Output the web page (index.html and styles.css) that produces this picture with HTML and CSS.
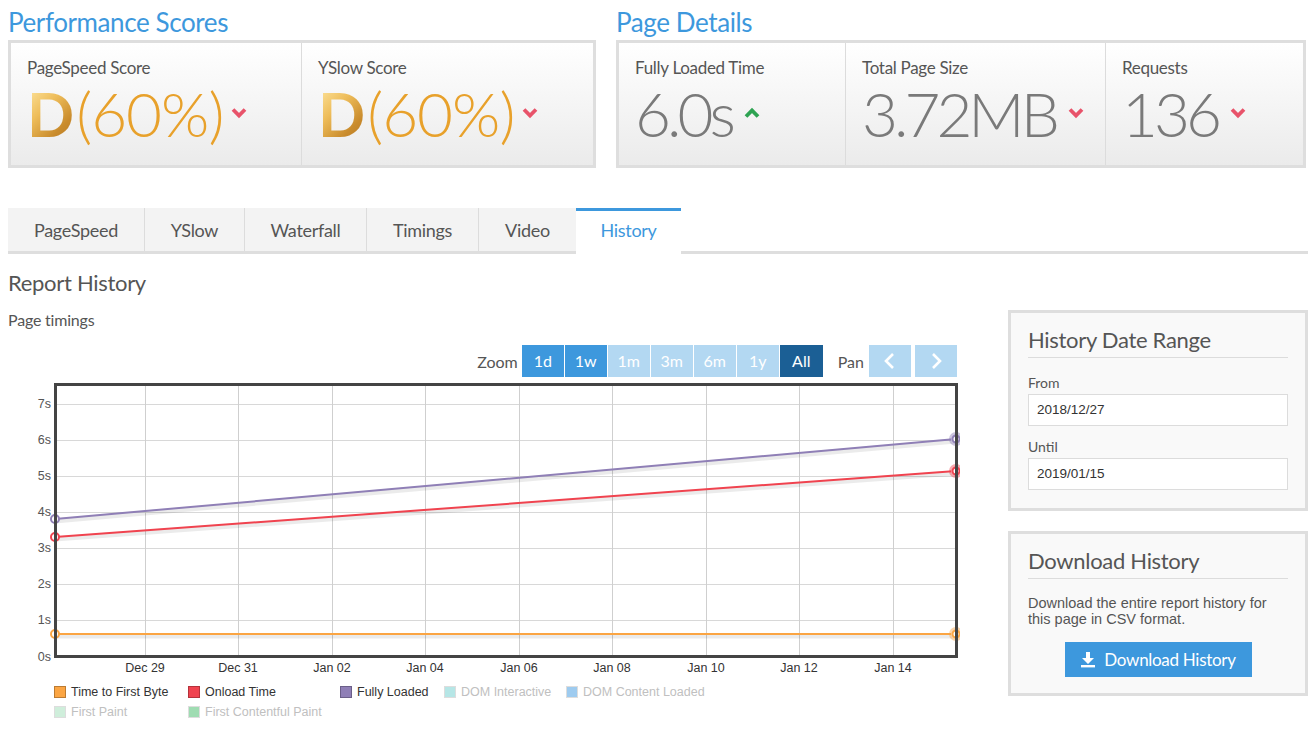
FILE: index.html
```html
<!DOCTYPE html>
<html>
<head>
<meta charset="utf-8">
<link rel="stylesheet" href="styles.css">
</head>
<body>
<div class="page">
  <div class="top">
    <section class="scores">
      <h2 class="sec-title">Performance Scores</h2>
      <div class="box">
        <div class="cell c-ps">
          <div class="label">PageSpeed Score</div>
          <div class="value"><span class="grade">D</span><span class="pct">(60%)</span>
            <svg class="chev" width="16" height="12" viewBox="0 0 16 12"><path d="M2 2.5 L8 8.5 L14 2.5" fill="none" stroke="#e8536a" stroke-width="3.8"/></svg></div>
        </div>
        <div class="cell c-ys">
          <div class="label">YSlow Score</div>
          <div class="value"><span class="grade">D</span><span class="pct">(60%)</span>
            <svg class="chev" width="16" height="12" viewBox="0 0 16 12"><path d="M2 2.5 L8 8.5 L14 2.5" fill="none" stroke="#e8536a" stroke-width="3.8"/></svg></div>
        </div>
      </div>
    </section>
    <section class="details">
      <h2 class="sec-title">Page Details</h2>
      <div class="box">
        <div class="cell c-fl">
          <div class="label">Fully Loaded Time</div>
          <div class="value grey">6.0s
            <svg class="chev" width="16" height="12" viewBox="0 0 16 12"><path d="M2 9.5 L8 3.5 L14 9.5" fill="none" stroke="#2ea352" stroke-width="3.8"/></svg></div>
        </div>
        <div class="cell c-sz">
          <div class="label">Total Page Size</div>
          <div class="value grey">3.72MB
            <svg class="chev" width="16" height="12" viewBox="0 0 16 12"><path d="M2 2.5 L8 8.5 L14 2.5" fill="none" stroke="#e8536a" stroke-width="3.8"/></svg></div>
        </div>
        <div class="cell c-rq">
          <div class="label">Requests</div>
          <div class="value grey">136
            <svg class="chev" width="16" height="12" viewBox="0 0 16 12"><path d="M2 2.5 L8 8.5 L14 2.5" fill="none" stroke="#e8536a" stroke-width="3.8"/></svg></div>
        </div>
      </div>
    </section>
  </div>

  <nav class="tabs">
    <div class="tab t1">PageSpeed</div>
    <div class="tab t2">YSlow</div>
    <div class="tab t3">Waterfall</div>
    <div class="tab t4">Timings</div>
    <div class="tab t5">Video</div>
    <div class="tab active t6">History</div>
  </nav>

  <div class="content">
    <div class="main">
      <h3 class="rh">Report History</h3>
      <h4 class="pt">Page timings</h4>
      <div class="zoombar">
        <span class="zlabel">Zoom</span>
        <span class="zb on">1d</span>
        <span class="zb on">1w</span>
        <span class="zb off">1m</span>
        <span class="zb off">3m</span>
        <span class="zb off">6m</span>
        <span class="zb off">1y</span>
        <span class="zb sel">All</span>
        <span class="zlabel pan">Pan</span>
        <span class="pb"><svg width="14" height="18" viewBox="0 0 14 18"><path d="M10 2 L3 9 L10 16" fill="none" stroke="#fff" stroke-width="2.6"/></svg></span>
        <span class="pb"><svg width="14" height="18" viewBox="0 0 14 18"><path d="M4 2 L11 9 L4 16" fill="none" stroke="#fff" stroke-width="2.6"/></svg></span>
      </div>
      <svg class="chart" width="952" height="300" viewBox="0 0 952 300">
        <g stroke="#d8d8d8" stroke-width="1">
          <line x1="46" y1="24.5" x2="949" y2="24.5"/>
          <line x1="46" y1="60.5" x2="949" y2="60.5"/>
          <line x1="46" y1="96.5" x2="949" y2="96.5"/>
          <line x1="46" y1="132.5" x2="949" y2="132.5"/>
          <line x1="46" y1="168.5" x2="949" y2="168.5"/>
          <line x1="46" y1="204.5" x2="949" y2="204.5"/>
          <line x1="46" y1="240.5" x2="949" y2="240.5"/>
        </g>
        <g stroke="#cfcfcf" stroke-width="1">
          <line x1="137.5" y1="3" x2="137.5" y2="277"/>
          <line x1="230.5" y1="3" x2="230.5" y2="277"/>
          <line x1="324.5" y1="3" x2="324.5" y2="277"/>
          <line x1="417.5" y1="3" x2="417.5" y2="277"/>
          <line x1="511.5" y1="3" x2="511.5" y2="277"/>
          <line x1="604.5" y1="3" x2="604.5" y2="277"/>
          <line x1="698.5" y1="3" x2="698.5" y2="277"/>
          <line x1="791.5" y1="3" x2="791.5" y2="277"/>
          <line x1="885.5" y1="3" x2="885.5" y2="277"/>
        </g>
        <g font-family="'Liberation Sans', Arial, sans-serif" font-size="12.5" fill="#555" text-anchor="end">
          <text x="43" y="28">7s</text>
          <text x="43" y="64">6s</text>
          <text x="43" y="100">5s</text>
          <text x="43" y="136">4s</text>
          <text x="43" y="172">3s</text>
          <text x="43" y="208">2s</text>
          <text x="43" y="244">1s</text>
          <text x="43" y="281">0s</text>
        </g>
        <g font-family="'Liberation Sans', Arial, sans-serif" font-size="12.5" fill="#333" text-anchor="middle">
          <text x="137" y="292">Dec 29</text>
          <text x="230" y="292">Dec 31</text>
          <text x="324" y="292">Jan 02</text>
          <text x="417" y="292">Jan 04</text>
          <text x="511" y="292">Jan 06</text>
          <text x="604" y="292">Jan 08</text>
          <text x="698" y="292">Jan 10</text>
          <text x="791" y="292">Jan 12</text>
          <text x="885" y="292">Jan 14</text>
        </g>
        <g fill="none" stroke-width="5" stroke="#000" stroke-opacity="0.08">
          <line x1="47" y1="141" x2="948" y2="61"/>
          <line x1="47" y1="159" x2="948" y2="93"/>
          <line x1="47" y1="256" x2="948" y2="256"/>
        </g>
        <line x1="47" y1="139" x2="948" y2="59" stroke="#8f7fb6" stroke-width="2"/>
        <line x1="47" y1="157" x2="948" y2="91" stroke="#f0434f" stroke-width="2"/>
        <line x1="47" y1="254" x2="948" y2="254" stroke="#fba543" stroke-width="2"/>
        <g fill="#fff" stroke-width="2">
          <circle cx="47" cy="139" r="4" stroke="#8f7fb6"/>
          <circle cx="948" cy="59" r="5" stroke="#8f7fb6" stroke-opacity="0.45" stroke-width="4"/>
          <circle cx="948" cy="59" r="3.5" stroke="#8f7fb6"/>
          <circle cx="47" cy="157" r="4" stroke="#f0434f"/>
          <circle cx="948" cy="91" r="5" stroke="#f0434f" stroke-opacity="0.45" stroke-width="4"/>
          <circle cx="948" cy="91" r="3.5" stroke="#f0434f"/>
          <circle cx="47" cy="254" r="4" stroke="#fba543"/>
          <circle cx="948" cy="254" r="5" stroke="#fba543" stroke-opacity="0.45" stroke-width="4"/>
          <circle cx="948" cy="254" r="3.5" stroke="#fba543"/>
        </g>
        <rect x="47.5" y="4.5" width="901" height="272" fill="none" stroke="#444" stroke-width="3"/>
      </svg>
      <div class="legend">
        <div class="li"><span class="sw" style="background:#fba543"></span>Time to First Byte</div>
        <div class="li"><span class="sw" style="background:#f0434f"></span>Onload Time</div>
        <div class="li"><span class="sw" style="background:#8f7fb6"></span>Fully Loaded</div>
        <div class="li dim"><span class="sw" style="background:#b6e6e6"></span>DOM Interactive</div>
        <div class="li dim"><span class="sw" style="background:#9ecbef"></span>DOM Content Loaded</div>
        <div class="li dim"><span class="sw" style="background:#cfeedb"></span>First Paint</div>
        <div class="li dim"><span class="sw" style="background:#9fdcb2"></span>First Contentful Paint</div>
      </div>
    </div>

    <aside class="side">
      <div class="panel">
        <h3 class="ph">History Date Range</h3>
        <div class="flabel first">From</div>
        <div class="input">2018/12/27</div>
        <div class="flabel">Until</div>
        <div class="input">2019/01/15</div>
      </div>
      <div class="panel p2">
        <h3 class="ph">Download History</h3>
        <p class="ptext">Download the entire report history for this page in CSV format.</p>
        <div class="btnwrap">
          <span class="btn"><svg width="16" height="17" viewBox="0 0 16 17"><path d="M6 1 H10 V7 H14 L8 13 L2 7 H6 Z" fill="#fff"/><rect x="1" y="14" width="14" height="2.4" fill="#fff"/></svg>Download History</span>
        </div>
      </div>
    </aside>
  </div>
</div>
</body>
</html>
```

FILE: styles.css
```css
* { box-sizing: border-box; }
body {
  margin: 0;
  background: #fff;
  color: #555;
  font-family: Lato, "Noto Sans", sans-serif;
}
.page {
  width: 1314px;
  padding: 0 6px 0 8px;
}
.top {
  display: flex;
  gap: 20px;
}
.scores { width: 588px; }
.details { width: 690px; }
.sec-title {
  margin: 0;
  height: 40px;
  font-size: 26px;
  font-weight: 400;
  line-height: 44px;
  color: #3d98dd;
  letter-spacing: -0.4px;
}
.box {
  display: flex;
  height: 128px;
  border: 3px solid #dedede;
  background: linear-gradient(#ffffff, #ebebeb);
}
.cell {
  padding: 15px 0 0 16px;
  border-left: 1px solid #dcdcdc;
}
.cell:first-child { border-left: 0; }
.c-ps { width: 290px; }
.c-ys { flex: 1; }
.c-fl { width: 226px; }
.c-sz { width: 260px; }
.c-rq { flex: 1; }
.label {
  font-size: 17px;
  line-height: 20px;
  color: #555;
  letter-spacing: -0.3px;
}
.value {
  display: flex;
  align-items: center;
  margin-top: 6px;
  height: 58px;
  font-size: 62px;
  font-weight: 300;
  line-height: 58px;
  letter-spacing: -1px;
}
.value.grey {
  color: #7a7a7a;
  letter-spacing: -4px;
}
.grade {
  font-weight: 700;
  background: linear-gradient(135deg, #ffe9a6 0%, #eebd5a 40%, #c98b2c 75%, #b77a26 100%);
  -webkit-background-clip: text;
  background-clip: text;
  color: transparent;
  margin-right: 3px;
}
.pct { color: #e8a12b; }
.chev { margin-left: 8px; margin-top: 0; }
.grey .chev { margin-left: 12px; }

.tabs {
  display: flex;
  margin-top: 40px;
  height: 46px;
  border-bottom: 3px solid #dedede;
  width: 1300px;
}
.tab {
  height: 43px;
  line-height: 44px;
  font-size: 18px;
  text-align: center;
  color: #555;
  background: #f3f3f3;
  border-right: 1px solid #dcdcdc;
  letter-spacing: -0.3px;
}
.t1 { width: 137px; }
.t2 { width: 100px; }
.t3 { width: 122px; }
.t4 { width: 112px; }
.t5 { width: 97px; border-right: 0; }
.tab.active {
  width: 105px;
  height: 46px;
  background: #fff;
  color: #3d98dd;
  border-top: 3px solid #3d98dd;
  border-right: 0;
  line-height: 39px;
}

.content {
  display: flex;
  gap: 48px;
}
.main { width: 952px; }
.rh {
  margin: 14px 0 0;
  font-size: 22px;
  font-weight: 400;
  line-height: 30px;
  color: #555;
  letter-spacing: -0.3px;
}
.pt {
  margin: 12px 0 0;
  font-size: 16px;
  font-weight: 400;
  line-height: 20px;
  color: #555;
  letter-spacing: -0.2px;
}
.zoombar {
  display: flex;
  justify-content: flex-end;
  align-items: center;
  gap: 1px;
  margin-top: 15px;
  height: 32px;
  padding-right: 3px;
}
.zlabel {
  font-size: 16px;
  color: #555;
  margin-right: 3px;
}
.zlabel.pan { margin-left: 14px; margin-right: 4px; }
.zb {
  width: 42px;
  height: 32px;
  line-height: 32px;
  text-align: center;
  font-size: 16px;
  color: #fff;
}
.zb.on { background: #3d98dd; }
.zb.off { background: #b3d8f2; }
.zb.sel { width: 43px; background: #1b5f95; }
.pb {
  display: flex;
  align-items: center;
  justify-content: center;
  width: 42px;
  height: 32px;
  background: #b3d8f2;
}
.pb + .pb { margin-left: 3px; }
.chart {
  display: block;
  margin-top: 3px;
}
.legend {
  display: grid;
  grid-template-columns: 134px 152px 104px 122px auto;
  row-gap: 4px;
  margin: 4px 0 0 46px;
  font-family: "Liberation Sans", Arial, sans-serif;
  font-size: 12.5px;
  color: #333;
}
.li {
  display: flex;
  align-items: center;
  height: 16px;
}
.li.dim { color: #c0c0c0; }
.sw {
  width: 12px;
  height: 12px;
  margin-right: 5px;
  border: 1px solid rgba(0,0,0,0.25);
}
.li.dim .sw { border-color: #ddd; }

.side {
  width: 300px;
  margin-top: 56px;
}
.panel {
  border: 3px solid #dedede;
  background: #f9f9f9;
  padding: 12px 17px 18px;
}
.panel.p2 {
  margin-top: 20px;
  padding-bottom: 16px;
}
.ph {
  margin: 0;
  padding-bottom: 2px;
  border-bottom: 1px solid #dcdcdc;
  font-size: 22px;
  font-weight: 400;
  line-height: 30px;
  color: #555;
  letter-spacing: -0.3px;
}
.flabel {
  margin-top: 12px;
  font-size: 14px;
  line-height: 18px;
  color: #555;
}
.flabel.first { margin-top: 16px; }
.input {
  margin-top: 2px;
  height: 32px;
  line-height: 30px;
  padding-left: 8px;
  background: #fff;
  border: 1px solid #dcdcdc;
  font-family: "Liberation Sans", Arial, sans-serif;
  font-size: 13.5px;
  color: #333;
}
.ptext {
  margin: 16px 0 0;
  font-family: "Liberation Sans", Arial, sans-serif;
  font-size: 14.5px;
  line-height: 16px;
  color: #555;
}
.btnwrap {
  display: flex;
  justify-content: center;
  margin-top: 15px;
}
.btn {
  display: flex;
  align-items: center;
  gap: 8px;
  width: 187px;
  height: 35px;
  justify-content: center;
  background: #3d98dd;
  color: #fff;
  font-size: 17px;
  letter-spacing: -0.3px;
}
```
